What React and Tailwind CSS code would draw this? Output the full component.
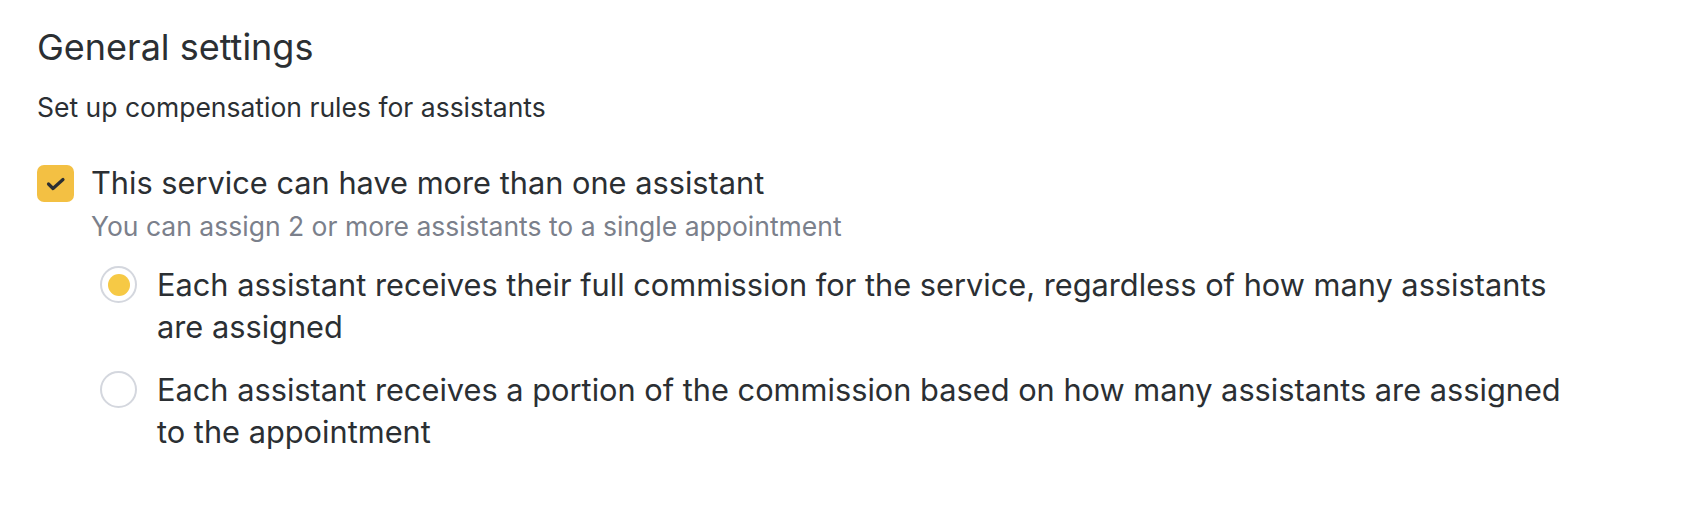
const Radio = ({ checked, children }) => (
  <label className="flex items-start gap-[20px]">
    <span className="mt-[2px] flex h-[37px] w-[37px] shrink-0 items-center justify-center rounded-full border-2 border-[#d4d7de] bg-white">
      {checked && <span className="h-[22px] w-[22px] rounded-full bg-[#f6c945]" />}
    </span>
    <span className="max-w-[1420px] text-[30.75px] leading-[42px]">{children}</span>
  </label>
);

export default function App() {
  return (
    <div className="min-h-[516px] bg-white pl-[37px] pr-[38px] pt-[25px] font-['Inter',sans-serif] text-[#2b2f33]">
      <h2 className="text-[36px] leading-[44px]">General settings</h2>
      <p className="mt-[21px] text-[26.5px] leading-[34px]">Set up compensation rules for assistants</p>

      <div className="mt-[38px] flex items-start gap-[17px]">
        <span className="mt-[3px] block h-[37px] w-[37px] shrink-0 rounded-[7px] bg-[#f3c043]">
          <svg viewBox="0 0 37 37" className="h-[37px] w-[37px]" fill="none">
            <polyline
              points="11.5,19 16,23.5 26,14.5"
              stroke="#2b2f33"
              strokeWidth="3.2"
              strokeLinecap="round"
              strokeLinejoin="round"
            />
          </svg>
        </span>
        <div>
          <p className="text-[30.75px] leading-[42px]">This service can have more than one assistant</p>
          <p className="mt-[5px] text-[26.5px] leading-[34px] text-[#7b808b]">
            You can assign 2 or more assistants to a single appointment
          </p>
        </div>
      </div>

      <div className="mt-[21px] ml-[63px] flex flex-col gap-[21px]">
        <Radio checked>
          Each assistant receives their full commission for the service, regardless of how many assistants are assigned
        </Radio>
        <Radio>
          Each assistant receives a portion of the commission based on how many assistants are assigned to the appointment
        </Radio>
      </div>
    </div>
  );
}
